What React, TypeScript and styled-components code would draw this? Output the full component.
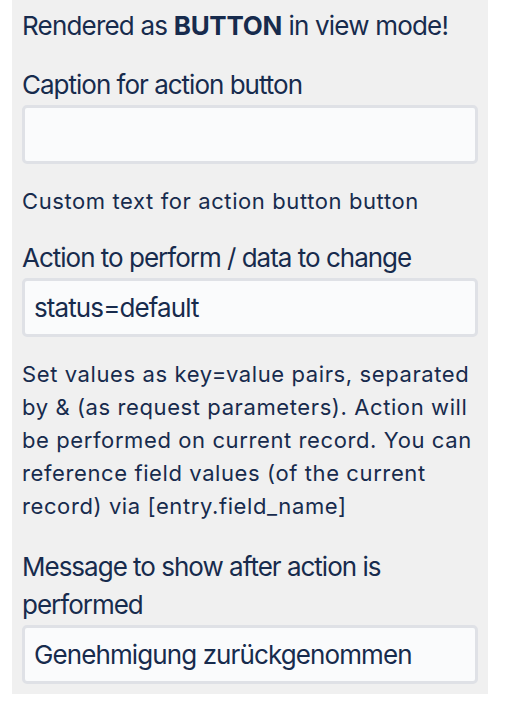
import React from "react";
import styled, { createGlobalStyle } from "styled-components";

const GlobalStyle = createGlobalStyle`
  body {
    margin: 0;
    background: #ffffff;
    font-family: Inter, "Liberation Sans", sans-serif;
    color: #172b4d;
  }
`;

const Panel = styled.div`
  margin-left: 12px;
  width: 476px;
  box-sizing: border-box;
  padding: 7px 10px 10px;
  background: #f0f0f0;
  display: flex;
  flex-direction: column;
`;

const Notice = styled.div`
  font-size: 26px;
  line-height: 38px;
  letter-spacing: -0.8px;

  b {
    font-weight: 700;
    letter-spacing: -0.3px;
  }
`;

const Field = styled.div<{ $gap: number }>`
  display: flex;
  flex-direction: column;
  margin-top: ${(p) => p.$gap}px;
`;

const Label = styled.label`
  font-size: 26px;
  line-height: 38px;
  letter-spacing: -1px;
  margin-bottom: 1px;
`;

const Input = styled.input`
  box-sizing: border-box;
  width: 100%;
  height: 59px;
  padding: 0 9px;
  border: 3px solid #dfe1e6;
  border-radius: 5px;
  background: #fafbfc;
  font-family: Inter, "Liberation Sans", sans-serif;
  font-size: 26px;
  letter-spacing: -0.9px;
  color: #172b4d;
  outline: none;
`;

const Help = styled.p`
  margin: 21px 0 0;
  font-size: 22px;
  line-height: 33px;
  letter-spacing: 0.6px;
`;

type FieldProps = { label: string; value: string; help?: string; gap?: number };

function ActionField({ label, value, help, gap = 21 }: FieldProps) {
  return (
    <Field $gap={gap}>
      <Label>{label}</Label>
      <Input value={value} readOnly />
      {help && <Help>{help}</Help>}
    </Field>
  );
}

export default function App() {
  return (
    <>
      <GlobalStyle />
      <Panel>
        <Notice>
          Rendered as <b>BUTTON</b> in view mode!
        </Notice>
        <ActionField
          label="Caption for action button"
          value=""
          help="Custom text for action button button"
        />
        <ActionField
          label="Action to perform / data to change"
          value="status=default"
          help="Set values as key=value pairs, separated by & (as request parameters). Action will be performed on current record. You can reference field values (of the current record) via [entry.field_name]"
        />
        <ActionField
          label="Message to show after action is performed"
          value="Genehmigung zurückgenommen"
          gap={25}
        />
      </Panel>
    </>
  );
}
